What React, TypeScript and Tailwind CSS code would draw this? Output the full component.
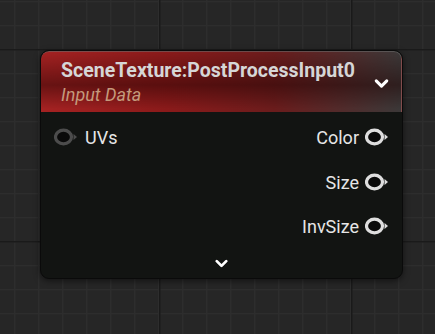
import { ChevronDown } from "lucide-react";

function Pin({ dim }: { dim?: boolean }) {
  const ring = dim ? "#4c4c4c" : "#dedede";
  return (
    <svg width="24" height="18" viewBox="0 0 24 18" className="shrink-0">
      <ellipse cx="9.5" cy="9" rx="8" ry="6.8" fill="#0a0a0a" stroke={ring} strokeWidth="3.2" />
      <polygon points="19.5,6 23,9 19.5,12" fill={ring} />
    </svg>
  );
}

function GridCanvas() {
  return (
    <svg className="absolute inset-0" width="435" height="334">
      <defs>
        <pattern id="minor" x="14" y="1" width="24" height="24" patternUnits="userSpaceOnUse">
          <path d="M0.5 0V24M0 0.5H24" stroke="#2d2d2d" strokeWidth="1.6" fill="none" />
        </pattern>
        <pattern id="major" x="159" y="49" width="192" height="192" patternUnits="userSpaceOnUse">
          <path d="M0.5 0V192M0 0.5H192" stroke="#1a1a1a" strokeWidth="2" fill="none" />
        </pattern>
      </defs>
      <rect width="435" height="334" fill="#262626" />
      <rect width="435" height="334" fill="url(#minor)" />
      <rect width="435" height="334" fill="url(#major)" />
    </svg>
  );
}

export default function App() {
  return (
    <div className="relative h-[334px] w-[435px] overflow-hidden bg-[#262626] font-['Roboto',sans-serif]">
      <GridCanvas />

      <div className="absolute left-[40px] top-[50px] flex h-[229px] w-[363px] flex-col overflow-hidden rounded-[9px] border border-[#0a0a0a] bg-[#121412] shadow-[0_2px_6px_rgba(0,0,0,0.5)]">
        {/* Header */}
        <div className="relative h-[61px] shrink-0 rounded-t-[8px] border-t border-r border-[#6a6a6a]/60 bg-[linear-gradient(to_right,#a52222_0%,#8a1a1a_35%,#6a1c1c_65%,#3b3838_100%)]">
          <div className="absolute inset-0 bg-[linear-gradient(to_bottom,rgba(0,0,0,0)_0%,rgba(30,0,0,0.45)_55%,rgba(0,0,0,0)_95%)]" />
          <div className="relative flex h-full items-center justify-between pl-[20px] pr-[9px]">
            <div className="flex flex-col">
              <span className="text-[19.5px] font-bold leading-[22px] text-[#d6d6d6]">
                SceneTexture:PostProcessInput0
              </span>
              <span className="mt-[3px] text-[18px] italic leading-[19px] text-[#c49a7c]">Input Data</span>
            </div>
            <ChevronDown className="mt-[2px] size-[21px] text-white" strokeWidth={3.5} />
          </div>
        </div>

        {/* Body */}
        <div className="flex flex-1 flex-col pl-[13px] pr-[13px] pt-[13px]">
          <div className="flex h-[24px] items-center justify-between">
            <div className="flex items-center gap-[7px]">
              <Pin dim />
              <span className="text-[18px] text-[#e6e6e6]">UVs</span>
            </div>
            <div className="flex items-center gap-[6px]">
              <span className="text-[18px] text-[#e6e6e6]">Color</span>
              <Pin />
            </div>
          </div>
          <div className="mt-[21px] flex h-[24px] items-center justify-end gap-[6px]">
            <span className="text-[18px] text-[#e6e6e6]">Size</span>
            <Pin />
          </div>
          <div className="mt-[20px] flex h-[24px] items-center justify-end gap-[6px]">
            <span className="text-[18px] text-[#e6e6e6]">InvSize</span>
            <Pin />
          </div>
          <div className="mt-[16px] flex justify-center">
            <ChevronDown className="size-[19px] text-white" strokeWidth={3.5} />
          </div>
        </div>
      </div>
    </div>
  );
}
